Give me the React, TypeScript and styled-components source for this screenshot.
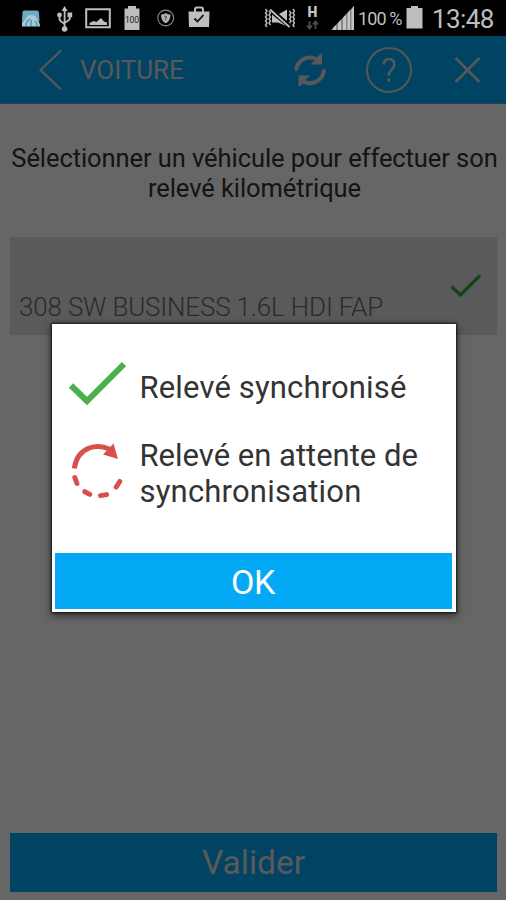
import React from "react";
import styled, { createGlobalStyle } from "styled-components";

const GlobalStyle = createGlobalStyle`
  * { box-sizing: border-box; }
  body { margin: 0; background: #000; font-family: Roboto, "Liberation Sans", sans-serif; }
  button { font: inherit; border: 0; padding: 0; background: none; color: inherit; display: block; }
  svg { display: block; flex: none; }
`;

const Screen = styled.div`
  width: 506px;
  height: 900px;
  display: flex;
  flex-direction: column;
  overflow: hidden;
`;

const StatusBar = styled.div`
  height: 36px;
  flex: none;
  display: flex;
  align-items: center;
  background: #000;
  color: #bebebe;
`;

const StatusItem = styled.div<{ $gap: number; $width: number }>`
  flex: none;
  width: ${(p) => p.$width}px;
  margin-left: ${(p) => p.$gap}px;
`;

const StatusText = styled(StatusItem)<{ $size: number; $spacing: number }>`
  font-size: ${(p) => p.$size}px;
  line-height: 36px;
  padding-top: 1px;
  letter-spacing: ${(p) => p.$spacing}px;
  white-space: nowrap;
`;

const Page = styled.div`
  position: relative;
  flex: 1;
  display: flex;
  flex-direction: column;
  background: #fff;
`;

const AppBar = styled.header`
  height: 68px;
  flex: none;
  display: flex;
  align-items: center;
  background: #03a9f4;
  color: #fff;
  border-bottom: 1px solid #5fa5c4;
  padding: 0 24px 0 38px;
`;

const AppTitle = styled.h1`
  flex: 1;
  margin: 1px 0 0 17px;
  font-size: 26px;
  font-weight: 400;
  letter-spacing: -0.05px;
  color: #dcdcdc;
`;

const Actions = styled.div`
  display: flex;
  align-items: center;
`;

const IconButton = styled.button<{ $gap?: number }>`
  margin-left: ${(p) => p.$gap ?? 0}px;
`;

const Prompt = styled.p`
  margin: 39px 0 34px;
  padding-left: 3px;
  text-align: center;
  font-size: 25.5px;
  line-height: 30px;
  letter-spacing: -0.08px;
  color: #333;
  white-space: nowrap;
`;

const VehicleRow = styled.div`
  height: 98px;
  margin: 0 9px 0 10px;
  padding: 0 15px 13px 9px;
  display: flex;
  align-items: flex-end;
  justify-content: space-between;
  background: #e0e0e0;
  color: #6c6c6c;
  font-size: 26px;
  font-weight: 300;
  line-height: 30px;
  letter-spacing: -0.18px;
  white-space: nowrap;
`;

const RowCheck = styled.span`
  padding-bottom: 22px;
`;

const Submit = styled.button`
  && {
    height: 59px;
    margin: auto 9px 8px 10px;
    background: #03a9f4;
    color: #dedede;
    font-size: 33.5px;
    letter-spacing: 0;
  }
`;

const Scrim = styled.div`
  position: absolute;
  inset: 0;
  display: flex;
  align-items: flex-start;
  justify-content: center;
  padding: 288px 0 0 1px;
  background: rgba(0, 0, 0, 0.6);
`;

const Dialog = styled.section`
  width: 404px;
  height: 288px;
  display: flex;
  flex-direction: column;
  padding: 37px 4px 3px 3px;
  background: #fff;
  box-shadow: 0 0 2px 1px rgba(0, 0, 0, 0.7), 0 3px 8px 1px rgba(0, 0, 0, 0.5);
`;

const LegendItem = styled.div<{ $top?: number }>`
  display: flex;
  align-items: flex-start;
  margin-top: ${(p) => p.$top ?? 0}px;
`;

const LegendIcon = styled.span<{ $top?: number }>`
  width: 85px;
  flex: none;
  padding: ${(p) => p.$top ?? 0}px 0 0 13px;
`;

const LegendText = styled.span<{ $top?: number }>`
  display: flex;
  flex-direction: column;
  padding-top: ${(p) => p.$top ?? 0}px;
  font-size: 31px;
  line-height: 36px;
  color: #333;
  white-space: nowrap;
`;

const LegendLine = styled.span<{ $spacing?: number }>`
  letter-spacing: ${(p) => p.$spacing ?? 0}px;
`;

const Confirm = styled.button`
  && {
    height: 56px;
    margin-top: auto;
    padding-top: 2px;
    background: #03a9f4;
    color: #fff;
    font-size: 34px;
    letter-spacing: -0.3px;
  }
`;

const WeatherIcon = () => (
  <svg width="20" height="36" viewBox="21 0 20 36">
    <path d="M22.500 12q0-1.500 2-1.500h12q2.500 0 2.500 2l.5 9H22z" fill="#6fa9c5" />
    <path d="M22 22q2.500-.5 3.500-3 2-4.500 6.500-4 5 .5 5 5 3 2 3 6.500H22z" fill="#a5c9d8" />
    <path d="M26 26q0-5 4-7m1 7q-.5-3 .5-6m5.500 6q0-4-2.500-5" stroke="#4a91af" strokeWidth="1.300" fill="none" />
  </svg>
);

const UsbIcon = () => (
  <svg width="16" height="36" viewBox="57 0 16 36" fill="none" stroke="currentColor" strokeWidth="1.800">
    <path d="M64.600 9v20M59.500 15v3q0 3 2.400 4l2.700 2M70 14v3q0 3-2.500 4l-2.900 2" />
    <path d="M64.600 6l3 5h-6z" fill="currentColor" stroke="none" />
    <circle cx="64.600" cy="29" r="2.800" fill="currentColor" stroke="none" />
    <circle cx="59.500" cy="15" r="2.400" fill="currentColor" stroke="none" />
    <path d="M67.500 12.500h4.700v4.700h-4.700z" fill="currentColor" stroke="none" />
  </svg>
);

const ImageIcon = () => (
  <svg width="26" height="36" viewBox="85 0 26 36">
    <path d="M86.200 9.200h23.600v18H86.200z" fill="none" stroke="currentColor" strokeWidth="2" />
    <path d="M89.500 25v-2l4-2 3 1 4.500-4 3 3.500 3 1V25z" fill="currentColor" />
  </svg>
);

const BatteryFullIcon = () => (
  <svg width="16" height="36" viewBox="124 0 16 36">
    <path d="M128 6h8v2.500h3.500V30h-15V8.500H128z" fill="currentColor" />
    <text x="132" y="22.500" textAnchor="middle" fontSize="8.500" fill="#222" textLength="14">100</text>
  </svg>
);

const ShieldIcon = () => (
  <svg width="18" height="36" viewBox="157 0 18 36">
    <circle cx="165.700" cy="18" r="7.900" fill="none" stroke="#8b8b8b" strokeWidth="1.100" />
    <path d="M161 14.500q3 0 4.700-1.500 2 1.500 4.800 1.500 0 6.500-4.800 8.800Q161 21 161 14.500z" fill="#b2b2b2" />
    <path d="M165.700 15.500v5m-1.500-3.500h3" stroke="#555" strokeWidth="1" />
  </svg>
);

const BagIcon = () => (
  <svg width="22" height="36" viewBox="188 0 22 36">
    <path d="M188.500 11.500h21L209 27h-20z" fill="currentColor" />
    <path d="M195 12V9.500q0-2 2-2h4q2 0 2 2V12" fill="none" stroke="currentColor" strokeWidth="2" />
    <path d="M194.500 18.500l3 3 6-6.500" fill="none" stroke="#111" strokeWidth="1.800" />
  </svg>
);

const VibrateIcon = () => (
  <svg width="31" height="36" viewBox="264 0 31 36" fill="none" stroke="currentColor" strokeWidth="1.400">
    <path d="M265.500 9l1.500 2-1.500 2 1.500 2-1.500 2 1.500 2-1.500 2 1.500 2-1.500 2 1.500 2M269 11l1.500 2-1.500 2 1.500 2-1.500 2 1.500 2-1.500 2 1.500 2M289.500 11l1.500 2-1.500 2 1.500 2-1.500 2 1.500 2-1.500 2M293 9l1.500 2-1.500 2 1.500 2-1.500 2 1.500 2-1.500 2 1.500 2-1.500 2 1.500 2" />
    <path d="M272 14.500v8h6l8 3.500zM279 14l8-4.500V21z" fill="currentColor" stroke="none" />
    <path d="M270 9.500L289.500 27" strokeWidth="1.800" />
  </svg>
);

const DataIcon = () => (
  <svg width="14" height="36" viewBox="306 0 14 36">
    <text x="312.500" y="17" textAnchor="middle" fontSize="14" fontWeight="900" fill="#c4c4c4">H</text>
    <path d="M309.500 21v7m-2.500-2.500l2.500 3 2.500-3M315.500 29v-7M313 24.500l2.500-3 2.500 3" fill="none" stroke="#4c4c4c" strokeWidth="1.800" />
  </svg>
);

const SignalIcon = () => (
  <svg width="24" height="36" viewBox="331 0 24 36">
    <path d="M331 30L354 6V30z" fill="#858585" />
    <path d="M333 30v-2l3-3v5zM338 30v-7l3-3v10zM343 30V18l3-3.500V30zM347.500 30V13l2.500-3v20zM351.500 30V9l2.500-3v24z" fill="#c4c4c4" />
  </svg>
);

const BatteryIcon = () => (
  <svg width="17" height="36" viewBox="406 0 17 36">
    <path d="M411 6h7v2h4.500v20.500h-16V8h4.500z" fill="currentColor" />
  </svg>
);

const BackIcon = () => (
  <svg width="25" height="42" viewBox="0 0 25 42">
    <path d="M23 1.500L2.500 21 23 40.500" fill="none" stroke="#dadada" strokeWidth="2.300" />
  </svg>
);

const SyncIcon = () => (
  <svg width="34" height="36" viewBox="293 52 34 36">
    <path d="M296 70.500a14 14 0 0 1 20-11.500M324 69.500a14 14 0 0 1-20.500 12" fill="none" stroke="#dcdcdc" strokeWidth="4" />
    <path d="M322 53v11.500h-12l4.500-3.500 2.500-4zM298.500 87V75.500h12L306 79l-2 4z" fill="#dcdcdc" />
  </svg>
);

const HelpIcon = () => (
  <svg width="48" height="48" viewBox="0 0 48 48" fill="none" stroke="#dadada">
    <circle cx="24" cy="24" r="22" strokeWidth="2" />
    <path d="M18.800 18.500q0-5.500 5.200-5.500t5.200 5.500q0 3-2.700 5.300-2.700 2.200-2.700 6.200" strokeWidth="2.500" />
    <circle cx="23.800" cy="34" r="1.700" fill="#dadada" stroke="none" />
  </svg>
);

const CloseIcon = () => (
  <svg width="28" height="28" viewBox="0 0 28 28">
    <path d="M1.500 2l24 24M25.500 2l-24 24" stroke="#dadada" strokeWidth="2.500" />
  </svg>
);

const SmallCheck = () => (
  <svg width="32" height="26" viewBox="0 0 32 26">
    <path d="M1.500 12.500L10.500 21 30 1.500" fill="none" stroke="#39a63e" strokeWidth="3.400" />
  </svg>
);

const CheckIcon = () => (
  <svg width="58" height="46" viewBox="68 361 58 46">
    <path d="M71 385.500l16 15.500 37-37" fill="none" stroke="#4caf50" strokeWidth="6" />
  </svg>
);

const PendingIcon = () => (
  <svg width="56" height="60" viewBox="68 441 56 60">
    <g fill="none" stroke="#d94f4c" strokeWidth="5">
      <path d="M74.300 468.500q2-15.500 15-20.500 10-3.300 20 1" />
      <path d="M74.800 477.500l2.200 6M84.800 491.700l5 2.700M100.500 495.600l6-1M116.200 487l3.600-5.500" strokeLinecap="round" />
    </g>
    <path d="M113.500 443.500l4.500 15.500-15-4.500z" fill="#d94f4c" />
  </svg>
);

export default function App() {
  return (
    <>
      <GlobalStyle />
      <Screen>
        <StatusBar>
          <StatusItem $gap={21} $width={20}><WeatherIcon /></StatusItem>
          <StatusItem $gap={16} $width={16}><UsbIcon /></StatusItem>
          <StatusItem $gap={12} $width={26}><ImageIcon /></StatusItem>
          <StatusItem $gap={13} $width={16}><BatteryFullIcon /></StatusItem>
          <StatusItem $gap={17} $width={18}><ShieldIcon /></StatusItem>
          <StatusItem $gap={13} $width={22}><BagIcon /></StatusItem>
          <StatusItem $gap={54} $width={31}><VibrateIcon /></StatusItem>
          <StatusItem $gap={11} $width={14}><DataIcon /></StatusItem>
          <StatusItem $gap={11} $width={24}><SignalIcon /></StatusItem>
          <StatusText $gap={3} $width={45} $size={18} $spacing={-0.9}>100 %</StatusText>
          <StatusItem $gap={3} $width={17}><BatteryIcon /></StatusItem>
          <StatusText $gap={9} $width={66} $size={26} $spacing={-0.6}>13:48</StatusText>
        </StatusBar>
        <Page>
          <AppBar>
            <IconButton aria-label="Retour"><BackIcon /></IconButton>
            <AppTitle>VOITURE</AppTitle>
            <Actions>
              <IconButton aria-label="Synchroniser"><SyncIcon /></IconButton>
              <IconButton aria-label="Aide" $gap={38}><HelpIcon /></IconButton>
              <IconButton aria-label="Fermer" $gap={41}><CloseIcon /></IconButton>
            </Actions>
          </AppBar>
          <Prompt>
            Sélectionner un véhicule pour effectuer son
            <br />
            relevé kilométrique
          </Prompt>
          <VehicleRow>
            <span>308 SW BUSINESS 1.6L HDI FAP</span>
            <RowCheck><SmallCheck /></RowCheck>
          </VehicleRow>
          <Submit>Valider</Submit>
          <Scrim>
            <Dialog role="dialog">
              <LegendItem>
                <LegendIcon><CheckIcon /></LegendIcon>
                <LegendText $top={9}>
                  <LegendLine $spacing={0.15}>Relevé synchronisé</LegendLine>
                </LegendText>
              </LegendItem>
              <LegendItem $top={31}>
                <LegendIcon $top={3}><PendingIcon /></LegendIcon>
                <LegendText>
                  <LegendLine>Relevé en attente de</LegendLine>
                  <LegendLine $spacing={0.2}>synchronisation</LegendLine>
                </LegendText>
              </LegendItem>
              <Confirm>OK</Confirm>
            </Dialog>
          </Scrim>
        </Page>
      </Screen>
    </>
  );
}
